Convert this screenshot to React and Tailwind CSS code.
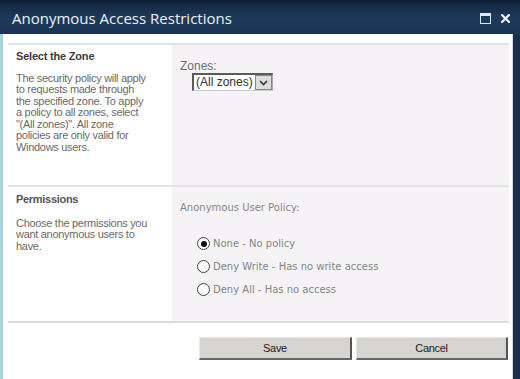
import React from "react";

export default function App() {
  const body = { fontFamily: '"Liberation Sans", Arial, sans-serif' };
  const verd = { fontFamily: '"DejaVu Sans", Verdana, sans-serif' };
  return (
    <div className="w-[520px] h-[379px] flex flex-col bg-white overflow-hidden" style={body}>
      {/* Title bar */}
      <div className="h-[34px] shrink-0 flex items-center justify-between pl-[12px] pr-[10px] bg-gradient-to-b from-[#13263f] via-[#1d3a5c] to-[#1a3453] border-t-2 border-[#0e1e33]">
        <div className="text-[15px] text-[#eef3f8]" style={{ fontFamily: '"Open Sans", "Liberation Sans", sans-serif' }}>
          Anonymous Access Restrictions
        </div>
        <div className="flex items-center gap-[10px] pt-[1px]">
          <div className="w-[11px] h-[11px] border border-[#dfe6ee] border-t-[3px]" />
          <svg width="9" height="9" viewBox="0 0 9 9">
            <path d="M1 1 L8 8 M8 1 L1 8" stroke="#eef3f8" strokeWidth="2.2" strokeLinecap="square" />
          </svg>
        </div>
      </div>
      {/* Body */}
      <div className="flex-1 flex border-l-[3px] border-l-[#a9d3e3] border-r-[7px] border-r-[#17304d]">
        <div className="flex-1 flex flex-col pl-[5px] pr-[3px] pt-[9px] bg-white border-r border-[#d9d9d9]">
          <div className="flex flex-col border-t-2 border-[#e3e3e3]">
            {/* Section 1 */}
            <div className="flex h-[140px]">
              <div className="w-[164px] pl-[8px] pr-[8px] pt-[3px]">
                <div className="text-[11px] font-bold text-[#3c3c3c] tracking-[-0.2px]">Select the Zone</div>
                <div className="mt-[8px] text-[11px] leading-[11.6px] text-[#6a6a6a] tracking-[-0.3px] whitespace-nowrap">
                  The security policy will apply<br />
                  to requests made through<br />
                  the specified zone. To apply<br />
                  a policy to all zones, select<br />
                  "(All zones)". All zone<br />
                  policies are only valid for<br />
                  Windows users.
                </div>
              </div>
              <div className="flex-1 bg-[#f5f3f6] pl-[8px] pt-[15px]">
                <div className="text-[12px] text-[#6f6f6f] leading-[13px]">Zones:</div>
                <div className="ml-[12px] flex h-[18px] w-[81px] bg-white border-t-2 border-l-2 border-[#5a5a5a] border-r border-b border-r-[#aaa] border-b-[#ccc]">
                  <div className="flex-1 text-[12px] leading-[15px] text-[#333] pl-[2px]">(All zones)</div>
                  <div className="w-[17px] h-[15px] bg-[#dcdcdc] border border-[#888] flex items-center justify-center">
                    <svg width="9" height="6" viewBox="0 0 9 6">
                      <path d="M1 1 L4.5 4.5 L8 1" fill="none" stroke="#333" strokeWidth="1.6" />
                    </svg>
                  </div>
                </div>
              </div>
            </div>
            <div className="h-[2px] bg-[#e3e3e3]" />
            {/* Section 2 */}
            <div className="flex h-[134px]">
              <div className="w-[164px] pl-[8px] pr-[8px] pt-[4px]">
                <div className="text-[11px] font-bold text-[#555] tracking-[-0.3px]">Permissions</div>
                <div className="mt-[10px] text-[11px] leading-[11.6px] text-[#6a6a6a] tracking-[-0.3px] whitespace-nowrap">
                  Choose the permissions you<br />
                  want anonymous users to<br />
                  have.
                </div>
              </div>
              <div className="flex-1 bg-[#f5f3f6] pl-[8px] pt-[15px]" style={verd}>
                <div className="text-[10px] text-[#888] leading-[12px]">Anonymous User Policy:</div>
                <div className="mt-[23px] ml-[17px] flex flex-col gap-[10px]">
                  {[
                    ["None - No policy", true],
                    ["Deny Write - Has no write access", false],
                    ["Deny All - Has no access", false],
                  ].map(([label, on]) => (
                    <div key={label} className="flex items-center h-[13px] gap-[3px]">
                      <div className="w-[13px] h-[13px] rounded-full border border-[#444] bg-white flex items-center justify-center">
                        {on && <div className="w-[6px] h-[6px] rounded-full bg-[#111]" />}
                      </div>
                      <div className="text-[10px] text-[#858585] leading-[13px]">{label}</div>
                    </div>
                  ))}
                </div>
              </div>
            </div>
            <div className="h-[2px] bg-[#dcdcdc]" />
          </div>
          {/* Buttons */}
          <div className="flex justify-end gap-[4px] mt-[14px] pr-[1px]">
            <button className="w-[153px] h-[23px] bg-[#d6d4d0] border border-t-[#e8e8e8] border-l-[#e8e8e8] border-r-2 border-b-2 border-r-[#555] border-b-[#666] text-[11px] text-[#222] tracking-[-0.3px]">
              Save
            </button>
            <button className="w-[152px] h-[23px] bg-[#d6d4d0] border border-t-[#e8e8e8] border-l-[#e8e8e8] border-r-2 border-b-2 border-r-[#555] border-b-[#666] text-[11px] text-[#222] tracking-[-0.3px]">
              Cancel
            </button>
          </div>
        </div>
      </div>
    </div>
  );
}
